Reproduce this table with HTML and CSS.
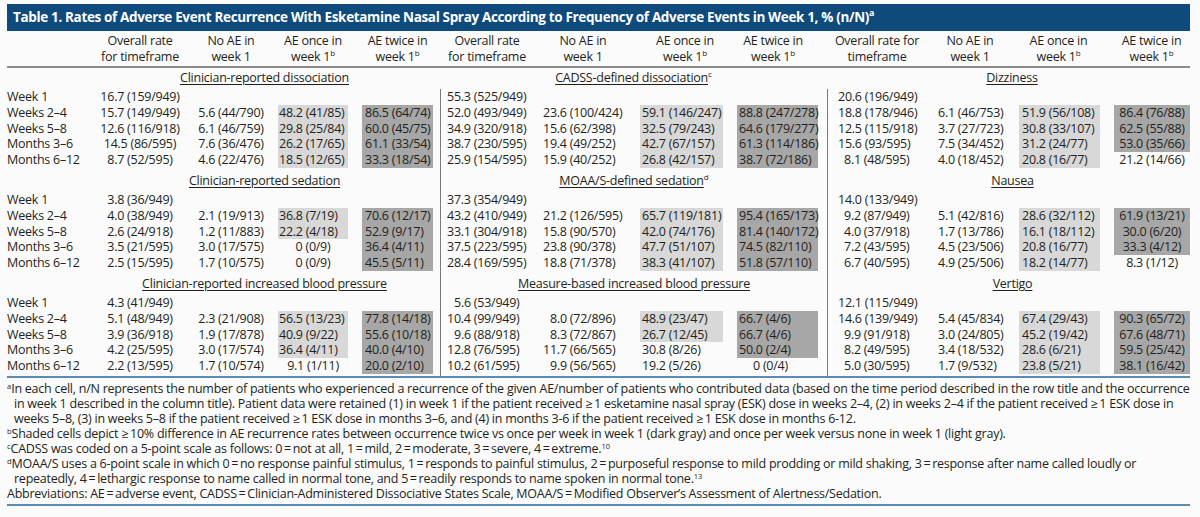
FILE: index.html
```html
<!DOCTYPE html>
<html lang="en">
<head>
<meta charset="utf-8">
<title>Table 1</title>
<link rel="stylesheet" href="styles.css">
</head>
<body>
<div class="page">
  <div class="title">Table 1. Rates of Adverse Event Recurrence With Esketamine Nasal Spray According to Frequency of Adverse Events in Week 1, % (n/N)<sup>a</sup></div>
  <div class="tbl">
    <div class="grp g1">
      <div class="hdr">
        <span class="lab"></span>
        <span class="ov">Overall rate<br>for timeframe</span>
        <span class="na">No AE in<br>week 1</span>
        <span class="on">AE once in<br>week 1<sup>b</sup></span>
        <span class="tw">AE twice in<br>week 1<sup>b</sup></span>
      </div>
      <div class="sttl"><span class="ul">Clinician-reported dissociation</span></div>
      <div class="body">
        <div class="rows">
          <div class="row"><span class="lab">Week 1</span><span class="ov">16.7 (159/949)</span></div>
          <div class="row"><span class="lab">Weeks 2–4</span><span class="ov">15.7 (149/949)</span><span class="na">5.6 (44/790)</span><span class="on L">48.2 (41/85)</span><span class="tw D">86.5 (64/74)</span></div>
          <div class="row"><span class="lab">Weeks 5–8</span><span class="ov">12.6 (116/918)</span><span class="na">6.1 (46/759)</span><span class="on L">29.8 (25/84)</span><span class="tw D">60.0 (45/75)</span></div>
          <div class="row"><span class="lab">Months 3–6</span><span class="ov">14.5 (86/595)</span><span class="na">7.6 (36/476)</span><span class="on L">26.2 (17/65)</span><span class="tw D">61.1 (33/54)</span></div>
          <div class="row"><span class="lab">Months 6–12</span><span class="ov">8.7 (52/595)</span><span class="na">4.6 (22/476)</span><span class="on L">18.5 (12/65)</span><span class="tw D">33.3 (18/54)</span></div>
        </div>
        <div class="sttl"><span class="ul">Clinician-reported sedation</span></div>
        <div class="rows">
          <div class="row"><span class="lab">Week 1</span><span class="ov">3.8 (36/949)</span></div>
          <div class="row"><span class="lab">Weeks 2–4</span><span class="ov">4.0 (38/949)</span><span class="na">2.1 (19/913)</span><span class="on L">36.8 (7/19)</span><span class="tw D">70.6 (12/17)</span></div>
          <div class="row"><span class="lab">Weeks 5–8</span><span class="ov">2.6 (24/918)</span><span class="na">1.2 (11/883)</span><span class="on L">22.2 (4/18)</span><span class="tw D">52.9 (9/17)</span></div>
          <div class="row"><span class="lab">Months 3–6</span><span class="ov">3.5 (21/595)</span><span class="na">3.0 (17/575)</span><span class="on c">0 (0/9)</span><span class="tw D">36.4 (4/11)</span></div>
          <div class="row"><span class="lab">Months 6–12</span><span class="ov">2.5 (15/595)</span><span class="na">1.7 (10/575)</span><span class="on c">0 (0/9)</span><span class="tw D">45.5 (5/11)</span></div>
        </div>
        <div class="sttl"><span class="ul">Clinician-reported increased blood pressure</span></div>
        <div class="rows">
          <div class="row"><span class="lab">Week 1</span><span class="ov">4.3 (41/949)</span></div>
          <div class="row"><span class="lab">Weeks 2–4</span><span class="ov">5.1 (48/949)</span><span class="na">2.3 (21/908)</span><span class="on L">56.5 (13/23)</span><span class="tw D">77.8 (14/18)</span></div>
          <div class="row"><span class="lab">Weeks 5–8</span><span class="ov">3.9 (36/918)</span><span class="na">1.9 (17/878)</span><span class="on L">40.9 (9/22)</span><span class="tw D">55.6 (10/18)</span></div>
          <div class="row"><span class="lab">Months 3–6</span><span class="ov">4.2 (25/595)</span><span class="na">3.0 (17/574)</span><span class="on L">36.4 (4/11)</span><span class="tw D">40.0 (4/10)</span></div>
          <div class="row"><span class="lab">Months 6–12</span><span class="ov">2.2 (13/595)</span><span class="na">1.7 (10/574)</span><span class="on c">9.1 (1/11)</span><span class="tw D">20.0 (2/10)</span></div>
        </div>
      </div>
    </div>

    <div class="grp g2">
      <div class="hdr">
        <span class="ov">Overall rate<br>for timeframe</span>
        <span class="na">No AE in<br>week 1</span>
        <span class="on">AE once in<br>week 1<sup>b</sup></span>
        <span class="tw">AE twice in<br>week 1<sup>b</sup></span>
      </div>
      <div class="sttl"><span class="ul">CADSS-defined dissociation</span><sup>c</sup></div>
      <div class="body">
        <div class="rows">
          <div class="row"><span class="ov">55.3 (525/949)</span></div>
          <div class="row"><span class="ov">52.0 (493/949)</span><span class="na">23.6 (100/424)</span><span class="on L">59.1 (146/247)</span><span class="tw D">88.8 (247/278)</span></div>
          <div class="row"><span class="ov">34.9 (320/918)</span><span class="na">15.6 (62/398)</span><span class="on L">32.5 (79/243)</span><span class="tw D">64.6 (179/277)</span></div>
          <div class="row"><span class="ov">38.7 (230/595)</span><span class="na">19.4 (49/252)</span><span class="on L">42.7 (67/157)</span><span class="tw D">61.3 (114/186)</span></div>
          <div class="row"><span class="ov">25.9 (154/595)</span><span class="na">15.9 (40/252)</span><span class="on L">26.8 (42/157)</span><span class="tw D">38.7 (72/186)</span></div>
        </div>
        <div class="sttl"><span class="ul">MOAA/S-defined sedation</span><sup>d</sup></div>
        <div class="rows">
          <div class="row"><span class="ov">37.3 (354/949)</span></div>
          <div class="row"><span class="ov">43.2 (410/949)</span><span class="na">21.2 (126/595)</span><span class="on L">65.7 (119/181)</span><span class="tw D">95.4 (165/173)</span></div>
          <div class="row"><span class="ov">33.1 (304/918)</span><span class="na">15.8 (90/570)</span><span class="on L">42.0 (74/176)</span><span class="tw D">81.4 (140/172)</span></div>
          <div class="row"><span class="ov">37.5 (223/595)</span><span class="na">23.8 (90/378)</span><span class="on L">47.7 (51/107)</span><span class="tw D">74.5 (82/110)</span></div>
          <div class="row"><span class="ov">28.4 (169/595)</span><span class="na">18.8 (71/378)</span><span class="on L">38.3 (41/107)</span><span class="tw D">51.8 (57/110)</span></div>
        </div>
        <div class="sttl"><span class="ul">Measure-based increased blood pressure</span></div>
        <div class="rows">
          <div class="row"><span class="ov n1">5.6 (53/949)</span></div>
          <div class="row"><span class="ov">10.4 (99/949)</span><span class="na n1">8.0 (72/896)</span><span class="on L">48.9 (23/47)</span><span class="tw D">66.7 (4/6)</span></div>
          <div class="row"><span class="ov n1">9.6 (88/918)</span><span class="na n1">8.3 (72/867)</span><span class="on L">26.7 (12/45)</span><span class="tw D">66.7 (4/6)</span></div>
          <div class="row"><span class="ov">12.8 (76/595)</span><span class="na">11.7 (66/565)</span><span class="on">30.8 (8/26)</span><span class="tw D">50.0 (2/4)</span></div>
          <div class="row"><span class="ov">10.2 (61/595)</span><span class="na n1">9.9 (56/565)</span><span class="on">19.2 (5/26)</span><span class="tw z">0 (0/4)</span></div>
        </div>
      </div>
    </div>

    <div class="grp g3">
      <div class="hdr">
        <span class="ov">Overall rate for<br>timeframe</span>
        <span class="na">No AE in<br>week 1</span>
        <span class="on">AE once in<br>week 1<sup>b</sup></span>
        <span class="tw">AE twice in<br>week 1<sup>b</sup></span>
      </div>
      <div class="sttl"><span class="ul">Dizziness</span></div>
      <div class="body">
        <div class="rows">
          <div class="row"><span class="ov">20.6 (196/949)</span></div>
          <div class="row"><span class="ov">18.8 (178/946)</span><span class="na">6.1 (46/753)</span><span class="on L">51.9 (56/108)</span><span class="tw D">86.4 (76/88)</span></div>
          <div class="row"><span class="ov">12.5 (115/918)</span><span class="na">3.7 (27/723)</span><span class="on L">30.8 (33/107)</span><span class="tw D">62.5 (55/88)</span></div>
          <div class="row"><span class="ov">15.6 (93/595)</span><span class="na">7.5 (34/452)</span><span class="on L">31.2 (24/77)</span><span class="tw D">53.0 (35/66)</span></div>
          <div class="row"><span class="ov n1">8.1 (48/595)</span><span class="na">4.0 (18/452)</span><span class="on L">20.8 (16/77)</span><span class="tw">21.2 (14/66)</span></div>
        </div>
        <div class="sttl"><span class="ul">Nausea</span></div>
        <div class="rows">
          <div class="row"><span class="ov">14.0 (133/949)</span></div>
          <div class="row"><span class="ov n1">9.2 (87/949)</span><span class="na">5.1 (42/816)</span><span class="on L">28.6 (32/112)</span><span class="tw D">61.9 (13/21)</span></div>
          <div class="row"><span class="ov n1">4.0 (37/918)</span><span class="na">1.7 (13/786)</span><span class="on L">16.1 (18/112)</span><span class="tw D">30.0 (6/20)</span></div>
          <div class="row"><span class="ov n1">7.2 (43/595)</span><span class="na">4.5 (23/506)</span><span class="on L">20.8 (16/77)</span><span class="tw D">33.3 (4/12)</span></div>
          <div class="row"><span class="ov n1">6.7 (40/595)</span><span class="na">4.9 (25/506)</span><span class="on L">18.2 (14/77)</span><span class="tw">8.3 (1/12)</span></div>
        </div>
        <div class="sttl"><span class="ul">Vertigo</span></div>
        <div class="rows">
          <div class="row"><span class="ov">12.1 (115/949)</span></div>
          <div class="row"><span class="ov">14.6 (139/949)</span><span class="na">5.4 (45/834)</span><span class="on L">67.4 (29/43)</span><span class="tw D">90.3 (65/72)</span></div>
          <div class="row"><span class="ov n1">9.9 (91/918)</span><span class="na">3.0 (24/805)</span><span class="on L">45.2 (19/42)</span><span class="tw D">67.6 (48/71)</span></div>
          <div class="row"><span class="ov n1">8.2 (49/595)</span><span class="na">3.4 (18/532)</span><span class="on L">28.6 (6/21)</span><span class="tw D">59.5 (25/42)</span></div>
          <div class="row"><span class="ov n1">5.0 (30/595)</span><span class="na">1.7 (9/532)</span><span class="on L">23.8 (5/21)</span><span class="tw D">38.1 (16/42)</span></div>
        </div>
      </div>
    </div>
  </div>

  <div class="notes">
    <p class="fn"><sup>a</sup>In each cell, n/N represents the number of patients who experienced a recurrence of the given AE/number of patients who contributed data (based on the time period described in the row title and the occurrence<br>in week 1 described in the column title). Patient data were retained (1) in week 1 if the patient received ≥&#8201;1 esketamine nasal spray (ESK) dose in weeks 2–4, (2) in weeks 2–4 if the patient received ≥&#8201;1 ESK dose in<br>weeks 5–8, (3) in weeks 5–8 if the patient received ≥&#8201;1 ESK dose in months 3–6, and (4) in months 3-6 if the patient received ≥&#8201;1 ESK dose in months 6-12.</p>
    <p class="fn"><sup>b</sup>Shaded cells depict ≥&#8201;10% difference in AE recurrence rates between occurrence twice vs once per week in week 1 (dark gray) and once per week versus none in week 1 (light gray).</p>
    <p class="fn"><sup>c</sup>CADSS was coded on a 5-point scale as follows: 0&#8201;=&#8201;not at all, 1&#8201;=&#8201;mild, 2&#8201;=&#8201;moderate, 3&#8201;=&#8201;severe, 4&#8201;=&#8201;extreme.<sup>10</sup></p>
    <p class="fn"><sup>d</sup>MOAA/S uses a 6-point scale in which 0&#8201;=&#8201;no response painful stimulus, 1&#8201;=&#8201;responds to painful stimulus, 2&#8201;=&#8201;purposeful response to mild prodding or mild shaking, 3&#8201;=&#8201;response after name called loudly or<br>repeatedly, 4&#8201;=&#8201;lethargic response to name called in normal tone, and 5&#8201;=&#8201;readily responds to name spoken in normal tone.<sup>13</sup></p>
    <p class="ab">Abbreviations: AE&#8201;=&#8201;adverse event, CADSS&#8201;=&#8201;Clinician-Administered Dissociative States Scale, MOAA/S&#8201;=&#8201;Modified Observer’s Assessment of Alertness/Sedation.</p>
  </div>
</div>
</body>
</html>
```

FILE: styles.css
```css
* { box-sizing: border-box; }
html, body { margin: 0; background: #fbfbfb; }
body {
  font-family: "Open Sans", "Noto Sans", sans-serif;
  font-size: 12.5px;
  letter-spacing: -0.25px;
  color: #231f20;
}
.page { width: 1190px; padding: 4px 0 0 7px; }

.title {
  height: 27px;
  line-height: 27px;
  background: #0e4a7c;
  color: #fff;
  font-weight: 700;
  font-size: 13.5px;
  letter-spacing: -0.35px;
  padding-left: 6px;
  white-space: nowrap;
}
sup { font-size: 8px; line-height: 0; vertical-align: 5px; letter-spacing: 0; }
.title sup { font-size: 9px; vertical-align: 6px; }

.tbl { display: flex; border-bottom: 2px solid #5a8db6; }
.g1 { width: 433px; }
.g2 { width: 387px; }
.g3 { width: 363px; }

.hdr {
  display: grid;
  height: 37px;
  padding-top: 2px;
  border-bottom: 2px solid #8c8c8c;
  line-height: 16px;
  text-align: center;
  white-space: nowrap;
}
.row {
  display: grid;
  height: 15.8px;
  line-height: 15.8px;
  white-space: nowrap;
}
.g1 .hdr, .g1 .row { grid-template-columns: 89px 88px 94px 70px 85px 1fr; }
.g2 .hdr { grid-template-columns: 94px 106px 83px 95px 1fr; }
.g2 .row { grid-template-columns: 93px 106px 83px 95px 1fr; }
.g3 .hdr, .g3 .row { grid-template-columns: 100px 91px 81px 1fr; }

.tw { margin-left: 14px; }

.sttl {
  height: 21px;
  line-height: 19px;
  text-align: center;
  white-space: nowrap;
}
.ul { text-decoration: underline; text-decoration-thickness: 1px; text-underline-offset: 2px; }
.g1 .sttl { padding-left: 89px; padding-right: 7px; }
.g3 .sttl { padding-left: 7px; }
.body .sttl { margin-top: 3px; }
.body { padding-bottom: 2px; }
.g2 .body, .g3 .body { border-left: 1px solid #7a7a7a; }

.L { background: #d8d8d8; }
.D { background: #a7a7a7; }

/* group 1 alignment */
.g1 .row .ov, .g1 .row .na { text-align: center; }
.g1 .row .on { padding-left: 1px; }
.g1 .row .on.c { text-align: center; padding-left: 0; }
.g1 .row .tw { padding-left: 3px; }

/* group 2 alignment */
.g2 .row .ov { padding-left: 6px; }
.g2 .row .ov.n1 { padding-left: 13px; }
.g2 .row .na { padding-left: 9px; }
.g2 .row .na.n1 { padding-left: 16px; }
.g2 .row .on { padding-left: 2px; }
.g2 .row .tw { padding-left: 2px; }
.g2 .row .tw.z { padding-left: 16px; }
.g2 .hdr .na { padding-right: 8px; }
.g2 .hdr .on { padding-left: 7px; }
.g2 .hdr .tw { padding-right: 9px; }

/* group 3 alignment */
.g3 .row .ov { padding-left: 10px; }
.g3 .row .ov.n1 { padding-left: 16px; }
.g3 .row .na { padding-left: 10px; }
.g3 .row .on { padding-left: 3px; }
.g3 .row .tw { text-align: center; }
.g3 .hdr .na { padding-right: 5px; }

.notes {
  width: 1183px;
  padding: 3px 0 3px;
  border-bottom: 2px solid #5a8db6;
  line-height: 15px;
  white-space: nowrap;
}
.notes p { margin: 0; }
.fn { padding-left: 7px; text-indent: -7px; }
.notes sup { font-size: 7.5px; vertical-align: 4px; }
```
